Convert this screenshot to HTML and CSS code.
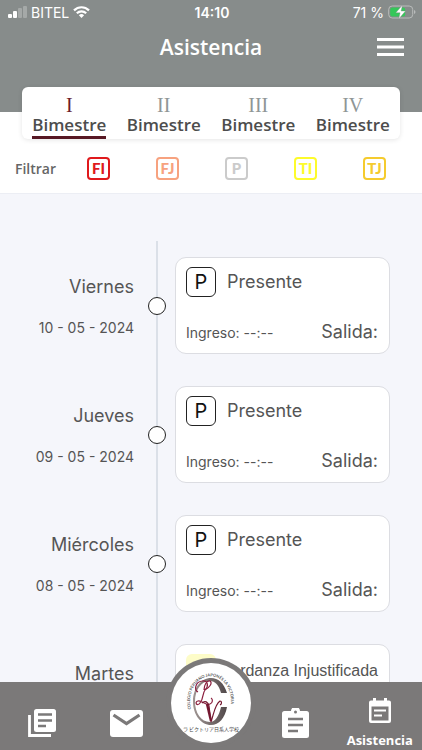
FILE: index.html
```html
<!DOCTYPE html>
<html lang="es">
<head>
  <meta charset="UTF-8" />
  <meta name="viewport" content="width=device-width, initial-scale=1" />
  <title>Asistencia</title>
  <link rel="stylesheet" href="styles.css">
</head>
<body>

  <header class="header">
    <div class="status">
      <div class="status-left">
        <svg width="19" height="12" viewBox="0 0 19 12" fill="#fff">
          <rect x="0" y="8" width="4" height="4" rx="1" />
          <rect x="5" y="5" width="4" height="7" rx="1" />
          <rect x="10" y="2" width="4" height="10" rx="1" opacity=".25" />
          <rect x="15" y="0" width="4" height="12" rx="1" opacity=".25" />
        </svg>
        <span>BITEL</span>
        <svg width="17" height="12" viewBox="0 0 17 12" fill="none" stroke="#fff" stroke-width="2.2">
          <path d="M1 4.4C5.300 .2 11.700 .2 16 4.400" />
          <path d="M3.800 7.300C6.500 4.700 10.500 4.700 13.200 7.300" />
          <path d="M5.900 9.200Q8.500 7 11.100 9.200L8.500 12Z" fill="#fff" stroke="none" />
        </svg>
      </div>
      <div class="clock">14:10</div>
      <div class="status-right">
        <span>71 %</span>
        <svg width="28" height="14" viewBox="0 0 28 14">
          <rect x=".7" y="1" width="24" height="12" rx="3.500" fill="none" stroke="#b9bcbb" />
          <rect x="2.200" y="2.500" width="15" height="9" rx="2" fill="#35c759" />
          <path d="M26 5v4q1.500-.5 1.500-2T26 5Z" fill="#b9bcbb" />
          <path d="M14.500 0L7.800 7.800h4.300L10.700 14l6.800-8h-4.400Z" fill="#fff" stroke="#878c8b" stroke-width=".4" />
        </svg>
      </div>
    </div>
    <div class="title-bar">
      <h1>Asistencia</h1>
      <button class="menu" aria-label="Menú">
        <svg width="28" height="20" viewBox="0 0 28 20" fill="#fff">
          <path d="M0 1h27v3H0zM0 8.500h27v3H0zM0 16h27v3H0z" />
        </svg>
      </button>
    </div>
  </header>

  <nav class="tabs">
    <button class="tab active"><span class="roman">I</span><span class="tab-label">Bimestre</span></button>
    <button class="tab"><span class="roman">II</span><span class="tab-label">Bimestre</span></button>
    <button class="tab"><span class="roman">III</span><span class="tab-label">Bimestre</span></button>
    <button class="tab"><span class="roman">IV</span><span class="tab-label">Bimestre</span></button>
  </nav>

  <div class="filters">
    <span class="filters-label">Filtrar</span>
    <button class="filter fi">FI</button>
    <button class="filter fj">FJ</button>
    <button class="filter p">P</button>
    <button class="filter ti">TI</button>
    <button class="filter tj">TJ</button>
  </div>

  <main class="timeline">
    <div class="entry">
      <div class="day"><span class="weekday">Viernes</span><span class="date">10 - 05 - 2024</span></div>
      <div class="axis"><span class="dot"></span></div>
      <div class="card">
        <div class="card-top"><span class="mark">P</span><span class="state">Presente</span></div>
        <div class="card-bottom"><span class="in">Ingreso: --:--</span><span class="out">Salida:</span></div>
      </div>
    </div>
    <div class="entry">
      <div class="day"><span class="weekday">Jueves</span><span class="date">09 - 05 - 2024</span></div>
      <div class="axis"><span class="dot"></span></div>
      <div class="card">
        <div class="card-top"><span class="mark">P</span><span class="state">Presente</span></div>
        <div class="card-bottom"><span class="in">Ingreso: --:--</span><span class="out">Salida:</span></div>
      </div>
    </div>
    <div class="entry">
      <div class="day"><span class="weekday">Miércoles</span><span class="date">08 - 05 - 2024</span></div>
      <div class="axis"><span class="dot"></span></div>
      <div class="card">
        <div class="card-top"><span class="mark">P</span><span class="state">Presente</span></div>
        <div class="card-bottom"><span class="in">Ingreso: --:--</span><span class="out">Salida:</span></div>
      </div>
    </div>
    <div class="entry">
      <div class="day"><span class="weekday">Martes</span><span class="date"></span></div>
      <div class="axis"><span class="dot"></span></div>
      <div class="card late">
        <div class="card-top"><span class="mark"></span><span class="state">Tardanza Injustificada</span></div>
      </div>
    </div>
  </main>

  <footer class="bottom-nav">
    <a href="#" aria-label="Noticias">
      <svg width="28" height="28" viewBox="0 0 28 28">
        <path d="M1.500 6v20.500H23" fill="none" stroke="#fff" stroke-width="2.800" />
        <rect x="6" y="0" width="22" height="23" rx="2.500" fill="#fff" />
        <path d="M10 5.500h14M10 11.500h14M10 17h8" stroke="#7b7979" stroke-width="2.600" />
      </svg>
    </a>
    <a href="#" aria-label="Mensajes">
      <svg width="33" height="27" viewBox="0 0 33 27">
        <rect width="33" height="27" rx="3" fill="#fff" />
        <path d="M3.500 5L16.500 13.500L29.500 5" fill="none" stroke="#7b7979" stroke-width="3.200" />
      </svg>
    </a>
    <a href="#" class="home" aria-label="Inicio">
      <svg class="logo" width="80" height="80" viewBox="0 0 80 80">
        <defs>
          <path id="ring" d="M20 46A20.500 25 0 1 1 59 46" />
          <linearGradient id="steel" x1="0" x2="1">
            <stop offset="0" stop-color="#a09694" />
            <stop offset="1" stop-color="#51494a" />
          </linearGradient>
        </defs>
        <text class="logo-ring"><textPath href="#ring">COLEGIO PERUANO JAPONÉS LA VICTORIA</textPath></text>
        <path d="M56 30C53 20 47 15 40 15C30 15 22 25 22 38.500S30 62 40 62C48 62 54 55 56 44H50C48 53 44 59 39 59C30 59 24 50 24 38.500S30 18 39 18C44 18 48 22 50 30Z" fill="url(#steel)" />
        <path d="M27 29C23 27 24 19 31 18C37 17 38 23 34 27C31 31 33 35 29 40C26 44 23 39 27 38C31 37 35 43 39 41C42 40 42 36 40 35M34 27C38 25 42 20 39 18C36 17 33 22 33 27" fill="none" stroke="#8b1f3e" stroke-width="1.200" />
        <path d="M31 40C34 37 37 39 38 43L40 59C43 50 44 41 49 38C51 38 51 41 49 42" fill="none" stroke="#741730" stroke-width="1.200" />
        <path d="M36 41L40 58" stroke="#741730" stroke-width="2.400" />
        <text class="logo-base" x="40" y="68" text-anchor="middle">ラ ビクトリア日系人学校</text>
      </svg>
    </a>
    <a href="#" aria-label="Tareas">
      <svg width="27" height="30" viewBox="0 0 27 30">
        <path d="M2.500 3H9a4.500 4.500 0 0 1 9 0h6.500A2.500 2.500 0 0 1 27 5.500v22a2.500 2.500 0 0 1-2.500 2.500h-22A2.500 2.500 0 0 1 0 27.500v-22A2.500 2.500 0 0 1 2.500 3Z" fill="#fff" />
        <circle cx="13.500" cy="4" r="1.500" fill="#7b7979" />
        <path d="M6 11h15M6 17h15M6 23h10" stroke="#7b7979" stroke-width="2.600" />
      </svg>
    </a>
    <a href="#" class="current">
      <svg width="22" height="25" viewBox="0 0 22 25">
        <path d="M2 2.500h2V0h3v2.500h8V0h3v2.500h2a2 2 0 0 1 2 2V23a2 2 0 0 1-2 2H2a2 2 0 0 1-2-2V4.500a2 2 0 0 1 2-2Z" fill="#fff" />
        <path d="M2.500 8.500h17v14h-17z" fill="#7b7979" />
        <path d="M5 12.500h12M5 17.500h8" stroke="#fff" stroke-width="2.200" />
      </svg>
      <span>Asistencia</span>
    </a>
  </footer>

</body>
</html>
```
FILE: styles.css
```css
* {
  box-sizing: border-box;
}

body {
  margin: 0;
  height: 100vh;
  display: flex;
  flex-direction: column;
  overflow: hidden;
  background: #f5f6fb;
  color: #555;
  font-family: Inter, sans-serif;
}

button {
  padding: 0;
  border: none;
  background: none;
  font-family: inherit;
  cursor: pointer;
}

svg {
  display: block;
}

.header {
  flex: none;
  height: 112px;
  background: #878c8b;
  color: #fff;
}

.status {
  display: grid;
  grid-template-columns: 1fr auto 1fr;
  align-items: center;
  height: 24px;
  padding: 0 6px 0 8px;
  font-size: 14px;
}

.status-left,
.status-right {
  display: flex;
  align-items: center;
  gap: 4px;
}

.status-right {
  justify-content: flex-end;
}

.clock {
  font-weight: 600;
}

.title-bar {
  display: grid;
  grid-template-columns: 1fr auto 1fr;
  align-items: center;
  height: 46px;
  padding: 0 17px;
}

h1 {
  grid-column: 2;
  margin: 0;
  font-family: "Open Sans", sans-serif;
  font-size: 21px;
  font-weight: 600;
}

.menu {
  justify-self: end;
}

.tabs {
  flex: none;
  display: grid;
  grid-template-columns: repeat(4, 1fr);
  height: 52px;
  margin: -25px 22px 0;
  background: #fff;
  border-radius: 6px;
  box-shadow: 0 1px 5px rgba(0, 0, 0, 0.1);
  z-index: 1;
}

.tab {
  justify-self: center;
  display: flex;
  flex-direction: column;
  align-items: center;
  padding-top: 8px;
  border-bottom: 3px solid transparent;
}

.tab.active {
  border-color: #571824;
}

.roman {
  font-family: "Liberation Serif", serif;
  font-size: 20px;
  line-height: 20px;
  color: #8f9696;
}

.active .roman {
  color: #6a1c2b;
}

.tab-label {
  font-family: "Open Sans", sans-serif;
  font-size: 17px;
  font-weight: 600;
  line-height: 20px;
  color: #4d4d4d;
}

.filters {
  flex: none;
  display: grid;
  grid-template-columns: 64px repeat(5, 1fr);
  align-items: center;
  justify-items: center;
  height: 82px;
  margin-top: -27px;
  padding: 31px 13px 0 0;
  background: #fff;
  border-bottom: 1px solid #eceef4;
}

.filters-label {
  justify-self: end;
  padding-right: 8px;
  font-family: "Open Sans", sans-serif;
  font-size: 14px;
  font-weight: 600;
  color: #666;
}

.filter {
  width: 23px;
  height: 23px;
  border: 2px solid;
  border-radius: 4px;
  font-family: Lato, sans-serif;
  font-size: 15px;
  font-weight: 900;
  line-height: 19px;
}

.fi { color: #e0191c; }
.fj { color: #f7a27f; }
.p { color: #cbcbcb; }
.ti { color: #fdfb2b; }
.tj { color: #f5cb2e; }

.timeline {
  flex: 1;
  min-height: 0;
  padding-top: 47px;
  overflow: hidden;
}

.entry {
  display: grid;
  grid-template-columns: 148px 18px 1fr;
  height: 129px;
}

.day {
  display: flex;
  flex-direction: column;
  justify-content: center;
  align-items: flex-end;
  gap: 20px;
  padding-right: 14px;
}

.weekday {
  font-size: 18px;
  line-height: 24px;
}

.date {
  height: 18px;
  font-size: 14px;
  line-height: 18px;
}

.axis {
  display: flex;
  align-items: center;
  background: linear-gradient(#dbe0e8, #dbe0e8) center / 2px 100% no-repeat;
}

.dot {
  width: 18px;
  height: 18px;
  border: 1px solid #222;
  border-radius: 50%;
  background: #fff;
}

.card {
  display: flex;
  flex-direction: column;
  justify-content: space-between;
  margin: 16px 32px 16px 9px;
  padding: 9px 11px 10px 10px;
  background: #fff;
  border: 1px solid #dcdde2;
  border-radius: 11px;
}

.card-top {
  display: flex;
  align-items: center;
  gap: 11px;
}

.mark {
  flex: none;
  width: 30px;
  height: 30px;
  border: 1px solid #222;
  border-radius: 6px;
  color: #111;
  font-size: 20px;
  line-height: 28px;
  text-align: center;
}

.state,
.out {
  font-size: 18px;
  line-height: 22px;
}

.card-bottom {
  display: flex;
  justify-content: space-between;
  align-items: baseline;
}

.in {
  font-size: 14px;
}

.late .card-top {
  justify-content: space-between;
  align-items: flex-end;
  gap: 0;
}

.late .mark {
  border: none;
  background: #fdfcc8;
}

.late .state {
  font-family: "Liberation Sans", sans-serif;
  font-size: 16px;
  line-height: 26px;
}

.bottom-nav {
  flex: none;
  display: grid;
  grid-template-columns: repeat(5, 1fr);
  height: 68px;
  background: #7b7979;
}

.bottom-nav a {
  display: flex;
  flex-direction: column;
  align-items: center;
  justify-content: center;
  padding-top: 14px;
  color: #fff;
  text-decoration: none;
}

.bottom-nav .current {
  gap: 8px;
  padding-top: 15px;
  font-family: "Open Sans", sans-serif;
  font-size: 13px;
  font-weight: 700;
  line-height: 18px;
}

.bottom-nav .home {
  position: relative;
  padding: 0;
}

/* round badge that rises above the bar */
.logo {
  position: absolute;
  bottom: 7px;
  background: #fff;
  border-radius: 50%;
  box-shadow: 0 0 0 5px #7b7979;
}

.logo-ring {
  font-family: Lato, sans-serif;
  font-size: 4px;
  font-weight: 700;
  fill: #555;
}

.logo-base {
  font-family: "Noto Sans CJK JP", sans-serif;
  font-size: 5px;
  fill: #444;
}
```
